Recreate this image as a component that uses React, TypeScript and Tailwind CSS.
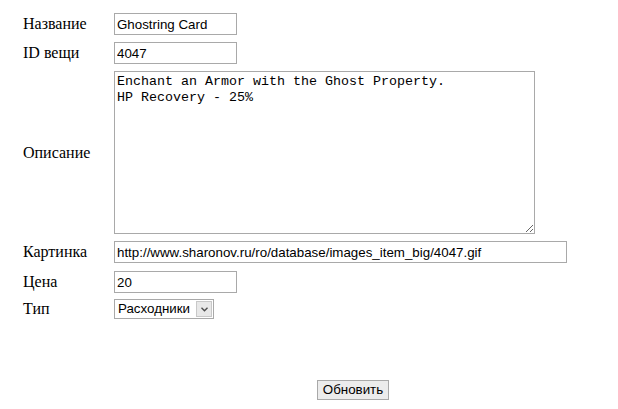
import React from "react";

const label = "w-[91px] shrink-0 text-[16px] text-black leading-none";

export default function App() {
  const inputCls =
    "h-[22px] border border-[#a9a9a9] bg-white px-[2px] text-[13.33px] text-black outline-none [font-family:'Liberation_Sans',Arial,sans-serif]";
  return (
    <div className="w-[618px] h-[409px] bg-white relative [font-family:'Liberation_Serif','Times_New_Roman',serif]">
      <div className="pl-[23px] pt-[13px] flex flex-col">
        <div className="flex items-center h-[22px]">
          <span className={label}>Название</span>
          <input className={`${inputCls} w-[123px]`} defaultValue="Ghostring Card" />
        </div>
        <div className="flex items-center h-[22px] mt-[7px]">
          <span className={label}>ID вещи</span>
          <input className={`${inputCls} w-[123px]`} defaultValue="4047" />
        </div>
        <div className="flex items-center mt-[7px]">
          <span className={label}>Описание</span>
          <textarea
            className="w-[421px] h-[163px] border border-[#a9a9a9] bg-white px-[2px] py-[2px] text-[13.33px] leading-[16px] text-black outline-none resize [font-family:'Liberation_Mono','Courier_New',monospace]"
            defaultValue={"Enchant an Armor with the Ghost Property.\nHP Recovery - 25%"}
          />
        </div>
        <div className="flex items-center h-[22px] mt-[7px]">
          <span className={label}>Картинка</span>
          <input
            className={`${inputCls} w-[453px]`}
            defaultValue="http://www.sharonov.ru/ro/database/images_item_big/4047.gif"
          />
        </div>
        <div className="flex items-center h-[22px] mt-[8px]">
          <span className={label}>Цена</span>
          <input className={`${inputCls} w-[123px]`} defaultValue="20" />
        </div>
        <div className="flex items-center h-[20px] mt-[6px]">
          <span className={label}>Тип</span>
          <div className="flex h-[20px] w-[100px] border border-[#a9a9a9] bg-white">
            <span className="flex-1 pl-[3px] text-[13.33px] leading-[18px] text-black [font-family:'Liberation_Sans',Arial,sans-serif]">
              Расходники
            </span>
            <span className="w-[16px] h-[16px] m-[1px] bg-[#e8e8e8] border border-[#c8c8c8] flex items-center justify-center">
              <svg width="7" height="5" viewBox="0 0 7 5">
                <path d="M0.5 0.8 L3.5 3.8 L6.5 0.8" fill="none" stroke="#4d4d4d" strokeWidth="1.4" />
              </svg>
            </span>
          </div>
        </div>
      </div>
      <div className="pl-[317px] mt-[58px]">
        <button className="h-[20px] w-[72px] border border-[#a9a9a9] bg-[#ececec] text-[13.33px] text-black leading-none [font-family:'Liberation_Sans',Arial,sans-serif]">
          Обновить
        </button>
      </div>
    </div>
  );
}
